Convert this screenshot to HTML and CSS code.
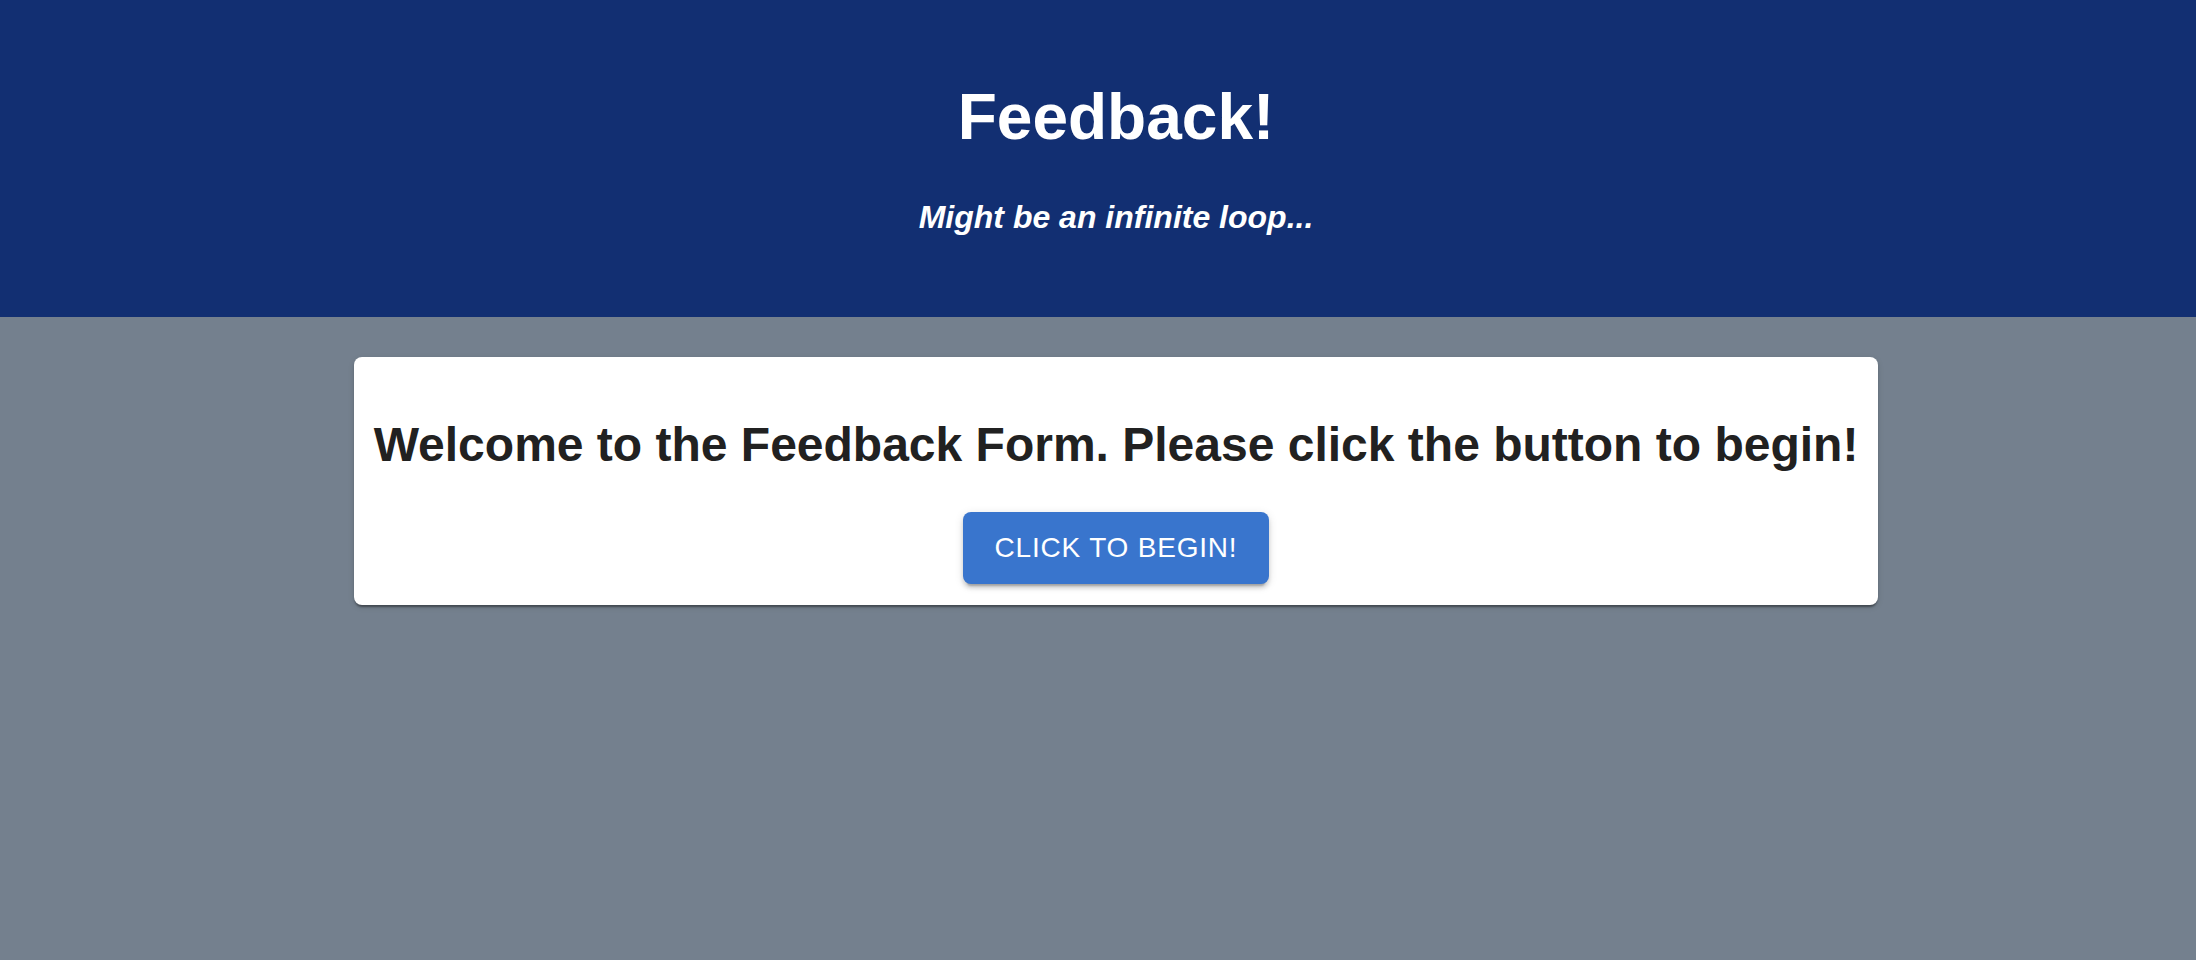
FILE: index.html
```html
<!DOCTYPE html>
<html lang="en">
<head>
<meta charset="utf-8">
<title>Feedback!</title>
<link rel="stylesheet" href="styles.css">
</head>
<body>
<header class="banner">
  <div class="banner-inner">
    <h1 class="banner-title">Feedback!</h1>
    <h4 class="banner-sub">Might be an infinite loop...</h4>
  </div>
</header>
<main class="main">
  <section class="card">
    <h2 class="card-title">Welcome to the Feedback Form. Please click the button to begin!</h2>
    <button class="btn" type="button">Click to begin!</button>
  </section>
</main>
</body>
</html>
```

FILE: styles.css
```css
html, body {
  margin: 0;
  padding: 0;
}
body {
  background: #74808e;
  font-family: "Liberation Sans", Arial, Helvetica, sans-serif;
  min-height: 960px;
}
.banner {
  background: #122f72;
  color: #ffffff;
}
.banner-inner {
  padding: 80px 0 81px 36px;
  text-align: center;
}
.banner-title {
  margin: 0;
  font-size: 64px;
  font-weight: 700;
  line-height: normal;
}
.banner-sub {
  margin: 45px 0 0;
  font-size: 32px;
  font-weight: 700;
  font-style: italic;
  line-height: normal;
}
.main {
  padding: 40px 0 0 36px;
  display: flex;
  justify-content: center;
}
.card {
  background: #ffffff;
  border-radius: 8px;
  padding: 20px 20px 21px;
  box-shadow: 0 4px 2px -2px rgba(0,0,0,0.25), 0 2px 2px 0 rgba(0,0,0,0.16), 0 2px 6px 0 rgba(0,0,0,0.12);
  display: flex;
  flex-direction: column;
  align-items: center;
}
.card-title {
  margin: 40px 0;
  font-size: 48px;
  font-weight: 700;
  line-height: normal;
  color: #212121;
  text-align: center;
  white-space: nowrap;
}
.btn {
  font-family: "Liberation Sans", Arial, Helvetica, sans-serif;
  font-size: 28px;
  line-height: 48px;
  letter-spacing: 0.8px;
  text-transform: uppercase;
  color: #ffffff;
  background: #3975cd;
  border: none;
  border-radius: 8px;
  padding: 12px 32px;
  box-shadow: 0 6px 2px -4px rgba(0,0,0,0.2), 0 4px 4px 0 rgba(0,0,0,0.14), 0 2px 10px 0 rgba(0,0,0,0.12);
  cursor: pointer;
}
```
